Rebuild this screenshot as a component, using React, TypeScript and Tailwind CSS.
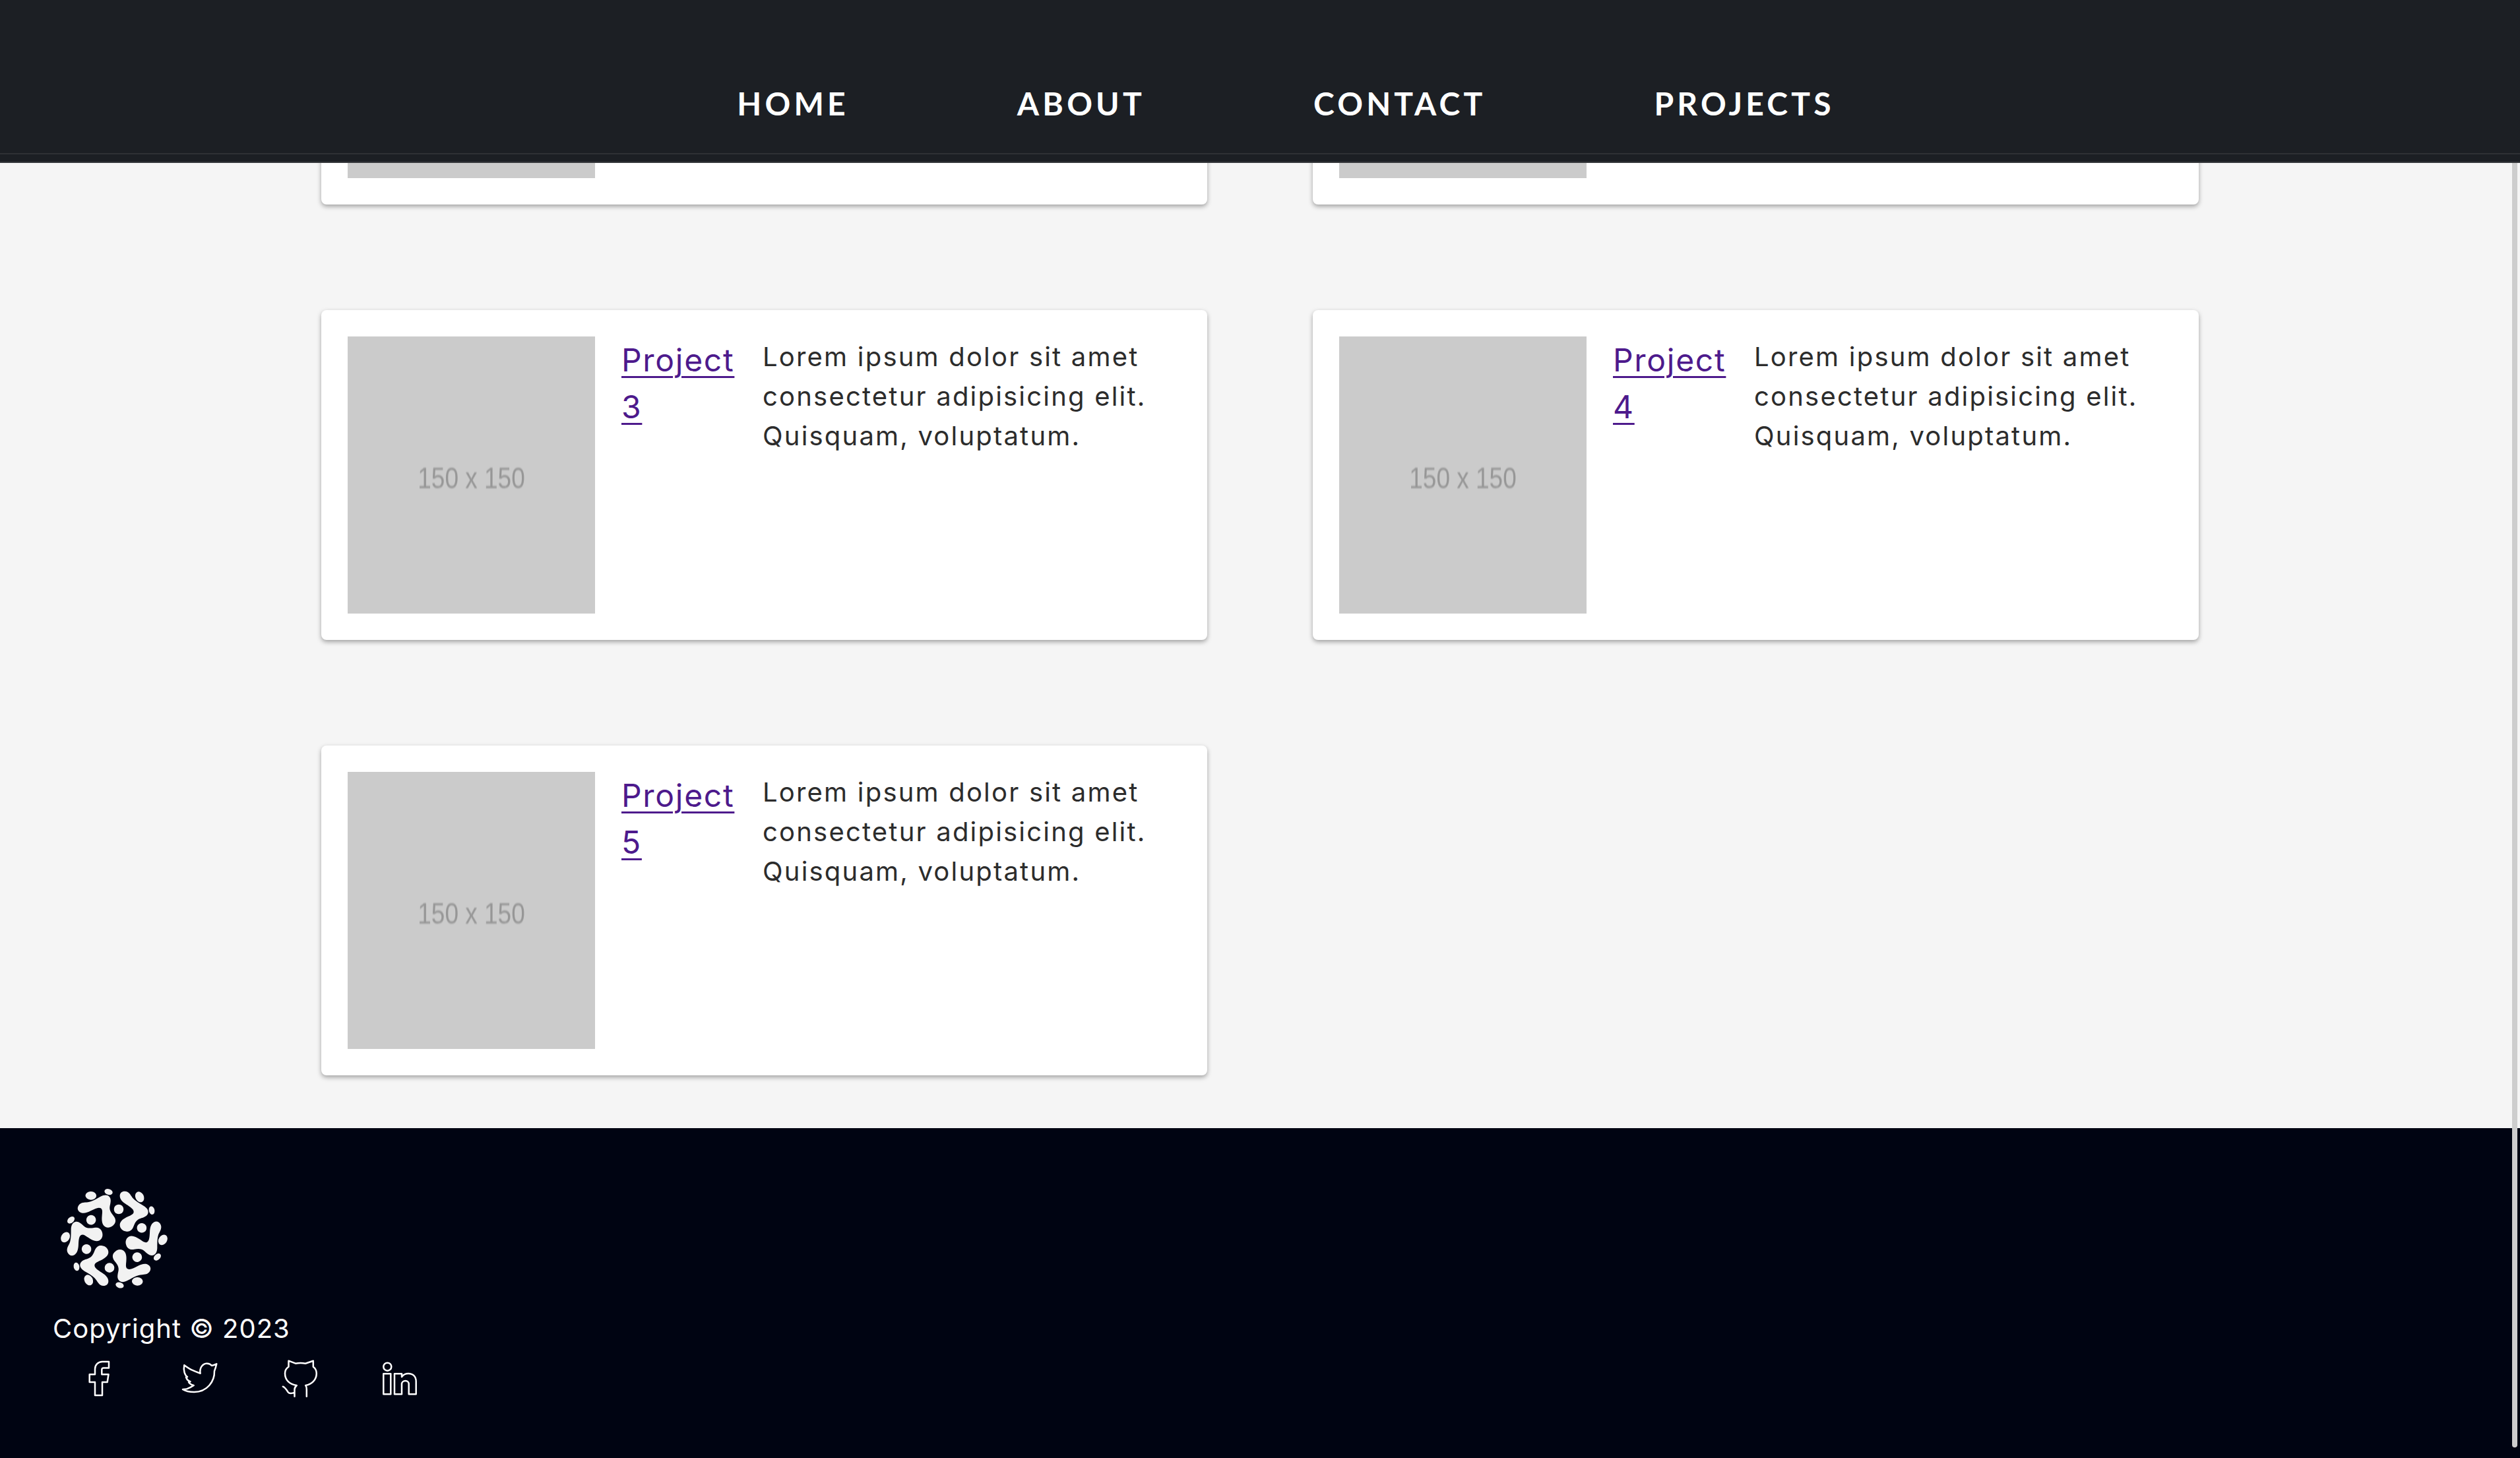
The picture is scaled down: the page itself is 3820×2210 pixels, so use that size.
const navItems = ["HOME", "ABOUT", "CONTACT", "PROJECTS"];

// first row is scrolled up behind the header, only the bottom of its cards shows
const projects = [
  { id: 1 },
  { id: 2 },
  { id: 3, name: "Project 3" },
  { id: 4, name: "Project 4" },
  { id: 5, name: "Project 5" },
];

const Header = () => (
  <header className="absolute top-0 left-0 z-50 h-[247px] w-full border-b-2 border-[#36383c] bg-[#1c1f24]">
    <nav className="flex h-[234px] items-end justify-center gap-[255px] border-b-2 border-[#2f3135] pb-[45px] pl-[78px]">
      {navItems.map((item) => (
        <a
          key={item}
          href="#"
          className="font-['Lato',sans-serif] text-[48px] leading-[60px] font-bold tracking-[5.2px] text-white"
        >
          {item}
        </a>
      ))}
    </nav>
  </header>
);

const ProjectCard = ({ name }: { name?: string }) => (
  <div className="flex h-[500px] gap-10 rounded-lg bg-white p-10 shadow-[0_3px_7px_rgba(0,0,0,0.35)]">
    <div className="flex h-[420px] w-[375px] shrink-0 items-center justify-center bg-[#cbcbcb] pt-3">
      {name && (
        <span className="scale-y-120 font-['Liberation_Sans',sans-serif] text-[37px] text-[#979797] blur-[0.7px]">
          150 x 150
        </span>
      )}
    </div>
    {name && (
      <>
        <h3 className="w-[174px] shrink-0 font-['Inter',sans-serif] text-[48px] leading-[71px] tracking-[1.7px]">
          <a href="#" className="text-[#4d1a8c] underline decoration-[3px] underline-offset-[7px]">
            {name}
          </a>
        </h3>
        <p className="flex-1 pt-px font-['Inter',sans-serif] text-[40px] leading-[60px] tracking-[2.2px] text-[#2c2c2c]">
          Lorem ipsum dolor sit amet consectetur adipisicing elit. Quisquam, voluptatum.
        </p>
      </>
    )}
  </div>
);

const Logo = () => (
  <svg viewBox="160 123 478 459" className="h-[153px] w-[160px] overflow-visible" fill="#f2f2f2">
    {[0, 60, 120, 180, 240, 300].map((angle) => (
      <g key={angle} transform={`rotate(${angle} 399 352)`}>
        <path d="M425 158C425 144 436 136 449 137C463 138 471 148 478 160C487 176 507 188 533 203C550 213 557 226 553 238C549 251 534 256 518 261C500 267 494 280 487 298C481 314 469 322 456 320C438 318 425 306 425 290C425 274 440 262 462 252C478 245 488 240 488 230C488 218 472 208 455 197C438 186 425 174 425 158Z" />
        <ellipse cx="515" cy="163" rx="19" ry="25" transform="rotate(-28 515 163)" />
        <ellipse cx="570" cy="224" rx="13" ry="19" transform="rotate(-12 570 224)" />
        <circle cx="420" cy="219" r="22" />
      </g>
    ))}
  </svg>
);

const iconProps = {
  viewBox: "0 0 60 60",
  fill: "none",
  stroke: "white",
  strokeWidth: 2.5,
  strokeLinejoin: "round" as const,
  strokeLinecap: "round" as const,
  className: "h-[60px] w-[60px]",
};

const SocialIcons = () => (
  <div className="mt-[15px] flex gap-[92px] pl-[40px]">
    <svg {...iconProps}>
      <path d="M45 5v9.5h-8a2.7 2.7 0 0 0-2.7 2.7V24.3H44.5L42.7 36H35V56H24V36H15.7V24.3H24V16A11 11 0 0 1 35 5Z" />
    </svg>
    <svg {...iconProps}>
      <path d="M7.3 10.3C11 13 15 16 19 17.7C23 19.5 28 21.5 31.7 22.7C30 15 35 8 41 7.7C44 7.5 47 8.5 49 11C51.5 10.5 54 9.5 56.3 8.3C55.5 12 54.5 15.5 53 19.3C53.5 35 42 51 22.3 51C15 51 9 49.5 5 47C9 47 13 46 15.7 44.3L21.7 41C18 40 15 38 14 36L16.5 35.2C13 34 11 31.5 10 28.5L12 28C8.5 26 5.5 19 7.3 10.3Z" />
    </svg>
    <svg {...iconProps}>
      <path d="M22.5 57.7V51.7C17 54 14 53 12.5 51C10 47 8 44 4.8 42.7M22.5 51.7V47C22.5 44 24 42.5 25.8 41C15 39.5 8 33 8 22.7C8 18.5 10 15 13.5 12.7V3.7L24 7.7C28 7 35 7 39 7.7L50.8 3.7V12.7C54 15 55.8 18.5 55.8 22.7C55.8 33 48 39.5 39.2 41C40.5 42.5 40.8 45 40.8 47V57.7" />
    </svg>
    <svg {...iconProps}>
      <circle cx="11.3" cy="12.7" r="6" />
      <rect x="5.3" y="23.3" width="11" height="31" />
      <path d="M22 23.3H33V28C35.5 24.5 39 23 43 23C50 23 54.7 27.5 54.7 35V54.3H43.7V39C43.7 36 41.5 34 38.5 34C35.5 34 33 36 33 39V54.3H22Z" />
    </svg>
  </div>
);

const Footer = () => (
  <footer className="h-[500px] bg-[#000412] pt-[91px] pl-[80px]">
    <div className="pl-[13px]">
      <Logo />
    </div>
    <p className="mt-[30px] font-['Inter',sans-serif] text-[40px] leading-[60px] tracking-[1px] text-white">
      Copyright © 2023
    </p>
    <SocialIcons />
  </footer>
);

export default function App() {
  return (
    <div className="relative h-[2210px] w-full overflow-hidden bg-[#f5f5f5]">
      <Header />
      <main className="mx-auto -mt-[190px] grid w-[2846px] grid-cols-2 gap-x-[160px] gap-y-[160px] pb-20">
        {projects.map((p) => (
          <ProjectCard key={p.id} name={p.name} />
        ))}
      </main>
      <Footer />
      {/* scrollbar thumb */}
      <div className="absolute top-[190px] right-1 z-10 h-[2004px] w-2 rounded-full bg-[#cdcdcd]" />
    </div>
  );
}
